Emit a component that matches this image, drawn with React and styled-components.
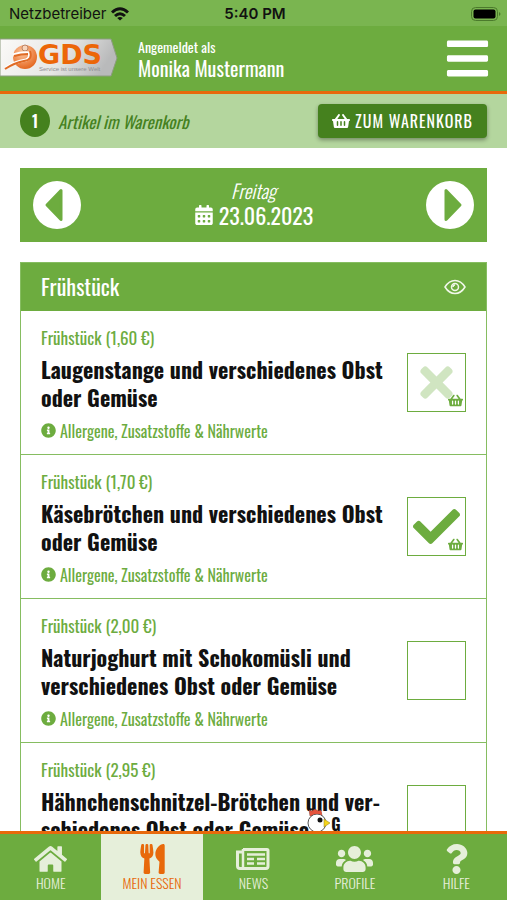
import styled, { createGlobalStyle } from 'styled-components';
import { useState } from 'react';
import {
  FaBars,
  FaCalendarAlt,
  FaCheck,
  FaHome,
  FaInfoCircle,
  FaQuestion,
  FaShoppingBasket,
  FaTimes,
  FaUsers,
  FaUtensils,
} from 'react-icons/fa';

const GlobalStyle = createGlobalStyle`
  :root {
    --green: #6dac3f;
    --dark-green: #45811e;
    --light-green: #b4d69e;
    --pale-green: #e6efda;
    --border-green: #86bd61;
    --orange: #e8690b;
  }
  * {
    box-sizing: border-box;
  }
  body {
    margin: 0;
    background: #fff;
    color: #111;
    font-family: 'Oswald', 'Roboto Condensed', 'Open Sans', sans-serif;
  }
  button {
    padding: 0;
    border: 0;
    background: none;
    color: inherit;
    font: inherit;
    cursor: pointer;
  }
  a {
    color: inherit;
    text-decoration: none;
  }
`;

const Page = styled.div`
  display: flex;
  flex-direction: column;
  height: 100vh;
`;

const StatusBar = styled.div`
  display: grid;
  grid-template-columns: 1fr auto 1fr;
  align-items: center;
  height: 26px;
  padding: 2px 6px 0 9px;
  background: #7ab550;
  color: #111;
  font-family: 'Inter', 'Liberation Sans', sans-serif;
  font-size: 15px;
  line-height: 20px;

  .carrier {
    display: flex;
    align-items: center;
    gap: 5px;
  }
  .clock {
    font-weight: 600;
  }
  .battery {
    justify-self: end;
  }
  svg {
    display: block;
  }
`;

const Header = styled.header`
  display: flex;
  align-items: center;
  height: 68px;
  padding-right: 16px;
  background: var(--green);
  border-bottom: 3px solid var(--orange);
  color: #fff;

  .logo {
    display: block;
    margin-bottom: 2px;
  }
  .logo svg {
    display: block;
  }
  .user {
    flex: 1;
    padding: 0 0 2px 18px;
    font-size: 14px;
    line-height: 20px;
  }
  .user strong {
    display: block;
    font-size: 20px;
    font-weight: 400;
    line-height: 22px;
  }
  .menu {
    font-size: 47px;
    line-height: 0;
  }
`;

const CartBar = styled.section`
  display: flex;
  align-items: center;
  height: 54px;
  padding: 0 20px;
  background: var(--light-green);
  color: var(--dark-green);

  .count {
    display: grid;
    place-items: center;
    width: 30px;
    height: 32px;
    border-radius: 50%;
    background: var(--dark-green);
    color: #fff;
    font-size: 16px;
    font-weight: 600;
  }
  .label {
    flex: 1;
    padding-left: 8px;
    font-size: 17px;
    font-style: italic;
  }
`;

const CartButton = styled.button`
  && {
    display: flex;
    align-items: center;
    gap: 5px;
    height: 34px;
    padding: 0 14px;
    border-radius: 4px;
    background: var(--dark-green);
    box-shadow: 0 2px 4px rgba(0, 0, 0, 0.35);
    color: #fff;
    font-size: 16px;
    letter-spacing: 1px;
    text-transform: uppercase;
  }
  svg {
    font-size: 18px;
  }
`;

const Content = styled.main`
  flex: 1;
  min-height: 0;
  overflow: hidden;
  padding: 20px 20px 0;
`;

const DateNav = styled.nav`
  display: flex;
  align-items: center;
  justify-content: space-between;
  height: 74px;
  padding: 0 13px;
  background: var(--green);
  color: #fff;

  .current {
    padding-bottom: 4px;
  }
  .day {
    font-size: 19px;
    font-style: italic;
    font-weight: 300;
    line-height: 24px;
    text-align: center;
  }
  .date {
    display: flex;
    align-items: center;
    gap: 5px;
    font-size: 22px;
    line-height: 26px;
  }
  .date svg {
    font-size: 20px;
  }
`;

const ArrowButton = styled.button`
  && {
    width: 48px;
    height: 48px;
    border-radius: 50%;
    background: #fff;
    color: var(--green);
  }
  svg {
    display: block;
    transform: ${(p) => (p.$next ? 'scaleX(-1)' : 'none')};
  }
`;

const Card = styled.section`
  margin-top: 20px;
  border: 1px solid var(--border-green);
`;

const CardHeader = styled.div`
  display: flex;
  align-items: center;
  justify-content: space-between;
  height: 48px;
  padding: 0 20px;
  background: var(--green);
  color: #fff;

  h2 {
    margin: 0;
    padding-bottom: 2px;
    font-size: 22px;
    font-weight: 400;
  }
  svg {
    display: block;
  }
`;

const MealRow = styled.article`
  display: flex;
  align-items: center;
  justify-content: space-between;
  gap: 16px;
  height: 144px;
  padding: 0 20px;
  border-bottom: 1px solid var(--border-green);

  .text {
    padding-top: 2px;
  }
  .price {
    color: var(--green);
    font-size: 17px;
    line-height: 26px;
  }
  h3 {
    margin: 4px 0 8px;
    font-size: 22px;
    font-weight: 700;
    line-height: 28px;
  }
  .info {
    display: flex;
    align-items: center;
    gap: 4px;
    color: var(--green);
    font-size: 16px;
    line-height: 24px;
  }
  .info svg {
    font-size: 15px;
  }
`;

const CheckLabel = styled.label`
  position: relative;
  display: grid;
  flex: none;
  place-items: center;
  width: 59px;
  height: 59px;
  border: 1px solid var(--green);
  color: var(--green);
  cursor: pointer;

  input {
    position: absolute;
    inset: 0;
    width: 100%;
    height: 100%;
    margin: 0;
    border: 0;
    appearance: none;
    cursor: pointer;
  }
  .mark {
    font-size: 47px;
    color: ${(p) => (p.$removed ? '#d0e5c1' : 'inherit')};
  }
  .basket {
    position: absolute;
    right: 2px;
    bottom: 3px;
    font-size: 15px;
  }
`;

const Marker = styled.span`
  white-space: nowrap;
  line-height: 0;

  svg {
    margin: -18px 0 0 -2px;
    vertical-align: 5px;
  }
  sup {
    font-size: 16px;
    vertical-align: 8px;
  }
`;

const TabBar = styled.nav`
  display: grid;
  grid-template-columns: repeat(5, 1fr);
  height: 69px;
  background: var(--green);
  border-top: 3px solid var(--orange);
`;

const Tab = styled.a`
  display: flex;
  flex-direction: column;
  align-items: center;
  padding-top: 10px;
  background: ${(p) => (p.$active ? 'var(--pale-green)' : 'none')};

  && {
    color: ${(p) => (p.$active ? 'var(--orange)' : 'var(--pale-green)')};
  }
  svg {
    flex: none;
    height: 30px;
  }
  span {
    font-size: 14px;
    font-weight: 300;
    line-height: 18px;
  }
`;

function Logo() {
  return (
    <svg width="120" height="40" viewBox="0 0 120 40" aria-label="GDS">
      <defs>
        <linearGradient id="plate" x1="0" y1="0" x2="1" y2="0.2">
          <stop offset="0" stopColor="#fbfaf8" />
          <stop offset="0.6" stopColor="#e6e6e4" />
          <stop offset="1" stopColor="#b9babb" />
        </linearGradient>
        <radialGradient id="ball" cx="0.4" cy="0.3" r="0.75">
          <stop offset="0" stopColor="#fbc9a4" />
          <stop offset="0.6" stopColor="#ef8a4d" />
          <stop offset="1" stopColor="#e2621a" />
        </radialGradient>
      </defs>
      <path d="M0 1H111L117 20L111 38H0Z" fill="url(#plate)" stroke="#8d9c80" strokeWidth="1" />
      <circle cx="25" cy="19" r="12" fill="url(#ball)" />
      <circle cx="25" cy="10" r="3" fill="#f8d5bc" stroke="#bb8466" strokeWidth="1" />
      <path d="M13 17Q23 14 29 15Q31 20 26 22Q14 24 6 30" fill="none" stroke="#fff" strokeWidth="3" />
      <path d="M14 18Q21 16 28 16M30 13Q33 22 24 23Q14 25 5 31" fill="none" stroke="#e06a24" strokeWidth="2" />
      <text x="38" y="26" fill="#ec6608" fontFamily="DejaVu Sans" fontSize="27" fontWeight="700">
        GDS
      </text>
      <text x="39" y="33" fill="#8f8f93" fontFamily="Liberation Sans" fontSize="6">
        Service ist unsere Welt
      </text>
    </svg>
  );
}

function WifiIcon() {
  return (
    <svg width="18" height="14" viewBox="0 0 18 14" fill="none" stroke="#111" strokeWidth="3">
      <path d="M1 5.5Q9 -2 17 5.5" />
      <path d="M4 9Q9 4.500 14 9" />
      <path d="M9 13.500L6.200 11Q9 8.800 11.800 11Z" fill="#111" stroke="none" />
    </svg>
  );
}

function BatteryIcon() {
  return (
    <svg width="30" height="14" viewBox="0 0 30 14">
      <rect x="0.5" y="0.5" width="26" height="13" rx="4" fill="none" stroke="#4b7a2c" />
      <rect x="2.500" y="2.500" width="22" height="9" rx="2" fill="#000" />
      <path d="M28 5Q31 7 28 9Z" fill="#4b7a2c" />
    </svg>
  );
}

function ArrowIcon() {
  return (
    <svg width="48" height="48" viewBox="0 0 48 48">
      <path d="M14 24L28 9.500V38.500Z" fill="currentColor" stroke="currentColor" strokeWidth="3" strokeLinejoin="round" />
    </svg>
  );
}

function EyeIcon() {
  return (
    <svg width="22" height="16" viewBox="0 0 22 16" fill="none" stroke="#f1f7ea" strokeWidth="1.500">
      <path d="M1 8Q5 1.500 11 1.500T21 8Q17 14.500 11 14.500T1 8Z" />
      <circle cx="11" cy="8" r="3.500" />
      <path d="M9 8Q9 6 11 6" />
    </svg>
  );
}

function NewsIcon() {
  return (
    <svg width="34" height="30" viewBox="0 0 34 30" fill="none" stroke="currentColor">
      <path d="M7 5.500H31Q32 5.500 32 6.500V22Q32 24.500 30 24.500H4Q1.500 24.500 1.500 22V8H6" strokeWidth="3" />
      <path d="M7 5V24" strokeWidth="2.500" />
      <path d="M11 10.500H29M11 15H18M21 15H29M11 19.500H18M21 19.500H29" strokeWidth="2.500" />
    </svg>
  );
}

function ChickenIcon() {
  return (
    <svg width="24" height="25" viewBox="0 0 24 25">
      <path d="M2 1L5 2L8 0L11 2L14 1L15 7H3Z" fill="#e5533d" stroke="#7b3a30" strokeWidth="0.500" />
      <circle cx="10" cy="14" r="9" fill="#fff" stroke="#555" />
      <path d="M3 3L14 2L15 6Q9 3 3 7Z" fill="#e5533d" />
      <circle cx="13" cy="11" r="2.500" fill="#111" />
      <path d="M17 10L23 14L17 18Z" fill="#f5d51b" stroke="#8f7a16" strokeWidth="0.500" />
    </svg>
  );
}

const meals = [
  { id: 1, price: '1,60', name: 'Laugenstange und verschiedenes Obst oder Gemüse', state: 'removed' },
  { id: 2, price: '1,70', name: 'Käsebrötchen und verschiedenes Obst oder Gemüse', state: 'added' },
  { id: 3, price: '2,00', name: 'Naturjoghurt mit Schokomüsli und verschiedenes Obst oder Gemüse' },
  { id: 4, price: '2,95', name: 'Hähnchenschnitzel-Brötchen und ver\u00adschiedenes Obst oder Gemüse', chicken: true },
];

const tabs = [
  { label: 'HOME', icon: <FaHome size={33} /> },
  { label: 'MEIN ESSEN', icon: <FaUtensils size={29} />, active: true },
  { label: 'NEWS', icon: <NewsIcon /> },
  { label: 'PROFILE', icon: <FaUsers size={37} /> },
  { label: 'HILFE', icon: <FaQuestion size={29} /> },
];

function Meal({ meal }) {
  const [checked, setChecked] = useState(meal.state === 'added');
  const removed = meal.state === 'removed' && !checked;

  return (
    <MealRow>
      <div className="text">
        <div className="price">Frühstück ({meal.price} €)</div>
        <h3>
          {meal.name}
          {meal.chicken && (
            <Marker>
              <ChickenIcon />
              <sup>G</sup>
            </Marker>
          )}
        </h3>
        <a className="info" href="#allergene">
          <FaInfoCircle />
          Allergene, Zusatzstoffe & Nährwerte
        </a>
      </div>
      <CheckLabel $removed={removed}>
        <input
          type="checkbox"
          aria-label={meal.name}
          checked={checked}
          onChange={(e) => setChecked(e.target.checked)}
        />
        {checked && <FaCheck className="mark" />}
        {removed && <FaTimes className="mark" />}
        {(checked || removed) && <FaShoppingBasket className="basket" />}
      </CheckLabel>
    </MealRow>
  );
}

function App() {
  return (
    <Page>
      <GlobalStyle />
      <StatusBar>
        <div className="carrier">
          Netzbetreiber
          <WifiIcon />
        </div>
        <div className="clock">5:40 PM</div>
        <div className="battery">
          <BatteryIcon />
        </div>
      </StatusBar>
      <Header>
        <a className="logo" href="#home">
          <Logo />
        </a>
        <div className="user">
          Angemeldet als
          <strong>Monika Mustermann</strong>
        </div>
        <button className="menu" aria-label="Menü">
          <FaBars />
        </button>
      </Header>
      <CartBar>
        <div className="count">1</div>
        <div className="label">Artikel im Warenkorb</div>
        <CartButton>
          <FaShoppingBasket />
          Zum Warenkorb
        </CartButton>
      </CartBar>
      <Content>
        <DateNav>
          <ArrowButton aria-label="Vorheriger Tag">
            <ArrowIcon />
          </ArrowButton>
          <div className="current">
            <div className="day">Freitag</div>
            <div className="date">
              <FaCalendarAlt />
              23.06.2023
            </div>
          </div>
          <ArrowButton $next aria-label="Nächster Tag">
            <ArrowIcon />
          </ArrowButton>
        </DateNav>
        <Card>
          <CardHeader>
            <h2>Frühstück</h2>
            <button aria-label="Ausblenden">
              <EyeIcon />
            </button>
          </CardHeader>
          {meals.map((meal) => (
            <Meal key={meal.id} meal={meal} />
          ))}
        </Card>
      </Content>
      <TabBar>
        {tabs.map((tab) => (
          <Tab key={tab.label} href="#tab" $active={tab.active}>
            {tab.icon}
            <span>{tab.label}</span>
          </Tab>
        ))}
      </TabBar>
    </Page>
  );
}

export default App;
